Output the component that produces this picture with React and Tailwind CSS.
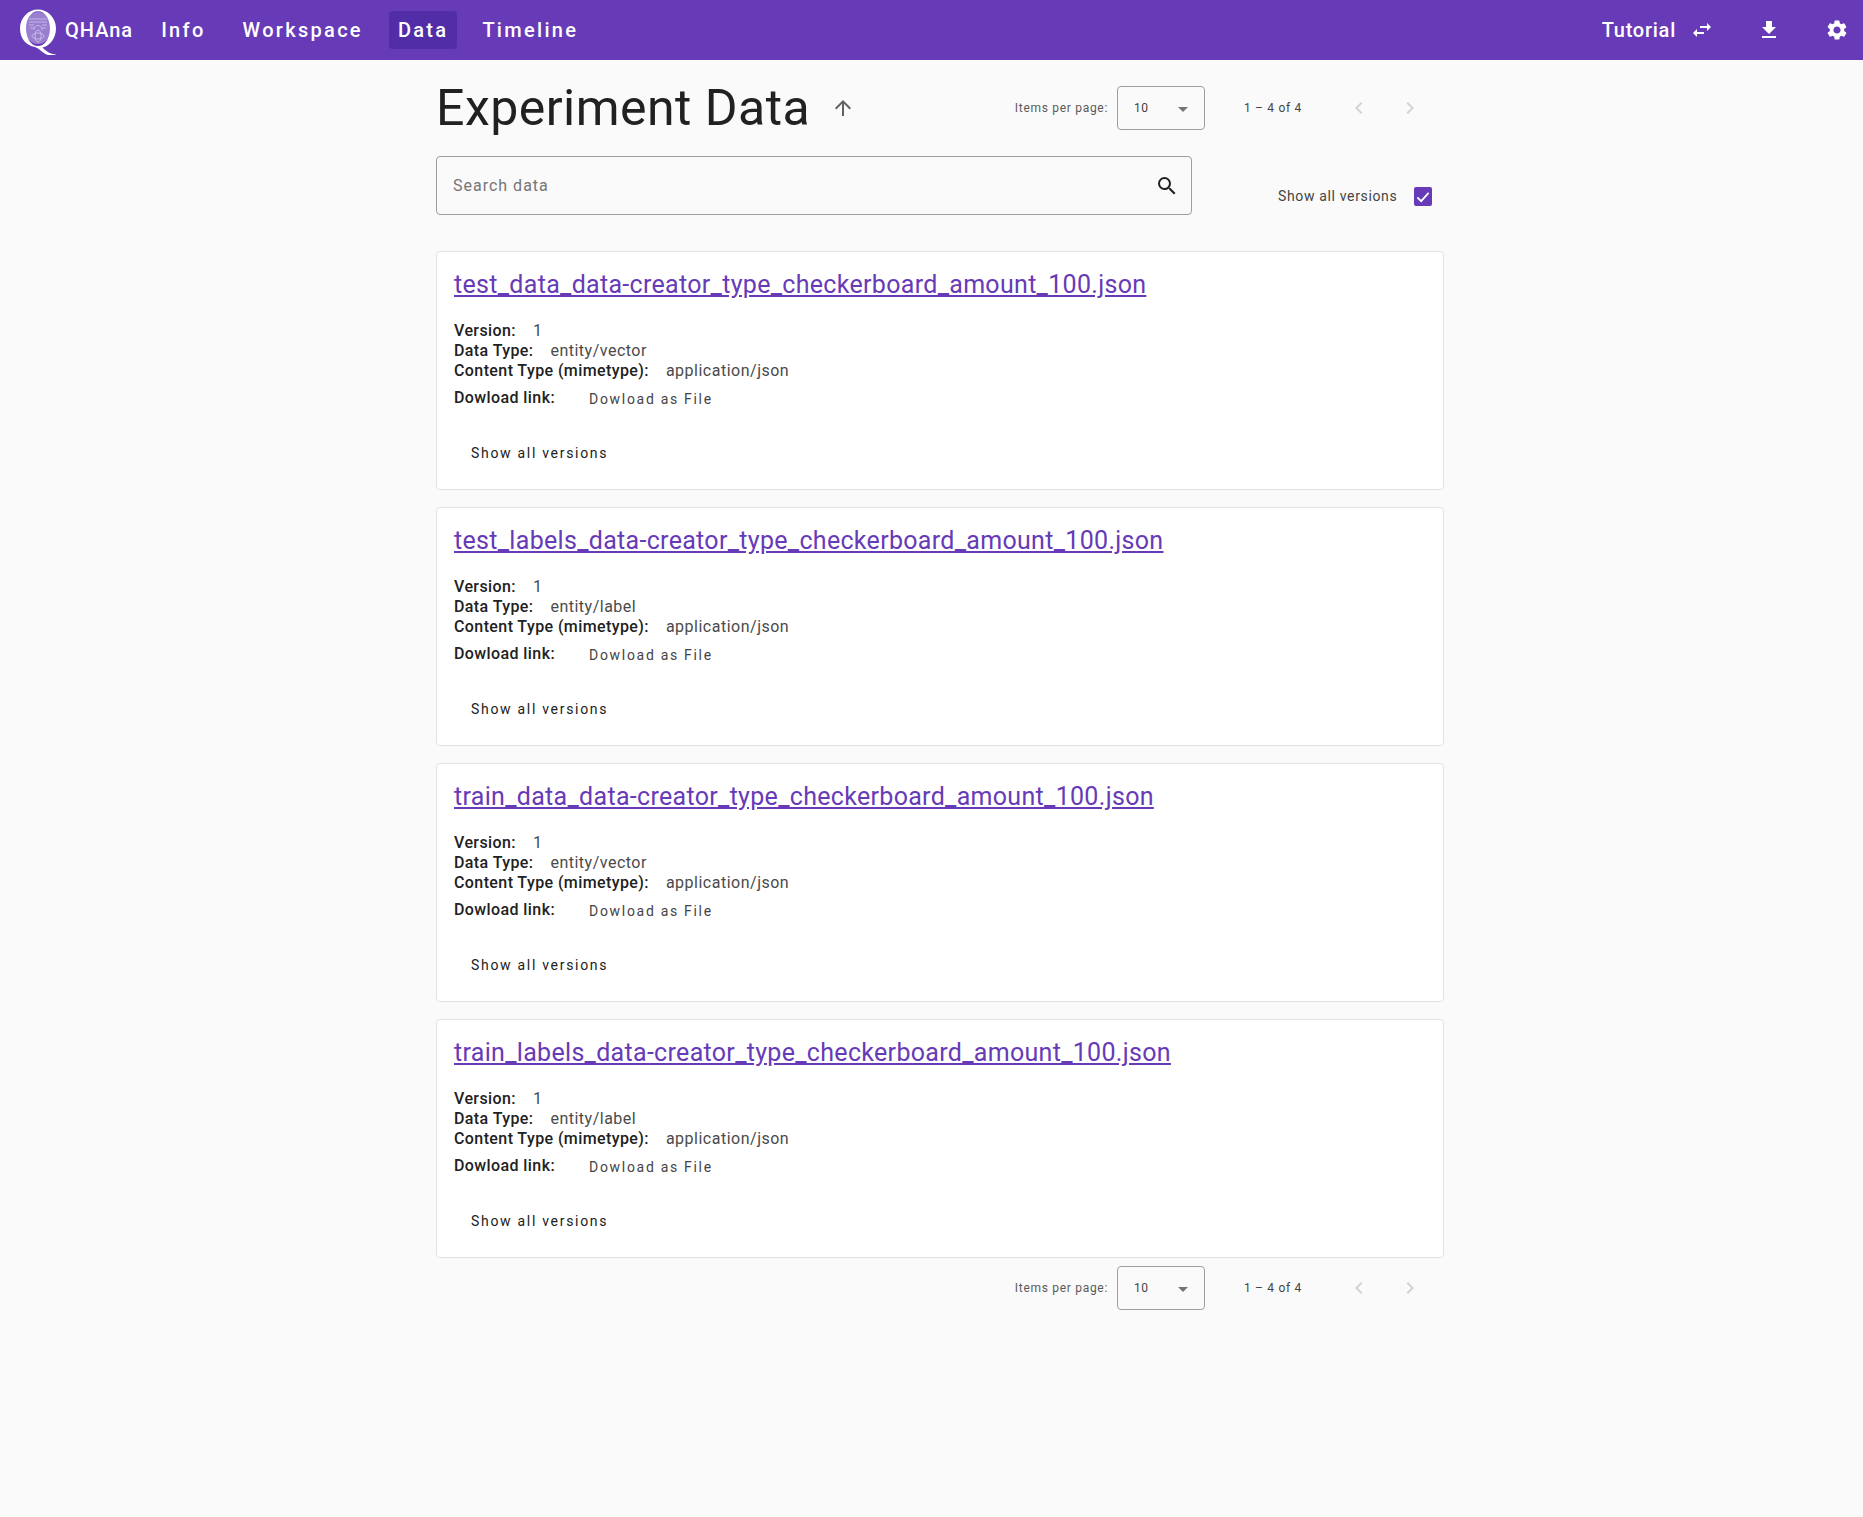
import React from 'react';

const ICONS = {
  swap: 'M6.99 11L3 15l3.99 4v-3H14v-2H6.99v-3zM21 9l-3.99-4v3H10v2h7.01v3L21 9z',
  download: 'M19 9h-4V3H9v6H5l7 7 7-7zM5 18v2h14v-2H5z',
  settings:
    'M19.14 12.94c.04-.3.06-.61.06-.94 0-.32-.02-.64-.07-.94l2.03-1.58a.49.49 0 0 0 .12-.61l-1.92-3.32a.488.488 0 0 0-.59-.22l-2.39.96c-.5-.38-1.03-.7-1.62-.94l-.36-2.54a.484.484 0 0 0-.48-.41h-3.84c-.24 0-.43.17-.47.41l-.36 2.54c-.59.24-1.13.57-1.62.94l-2.39-.96c-.22-.08-.47 0-.59.22L2.74 8.87c-.12.21-.08.47.12.61l2.03 1.58c-.05.3-.09.63-.09.94s.02.64.07.94l-2.03 1.58a.49.49 0 0 0-.12.61l1.92 3.32c.12.22.37.29.59.22l2.39-.96c.5.38 1.03.7 1.62.94l.36 2.54c.05.24.24.41.48.41h3.84c.24 0 .44-.17.47-.41l.36-2.54c.59-.24 1.13-.56 1.62-.94l2.39.96c.22.08.47 0 .59-.22l1.92-3.32c.12-.22.07-.47-.12-.61l-2.01-1.58zM12 15.6c-1.98 0-3.6-1.62-3.6-3.6s1.62-3.6 3.6-3.6 3.6 1.62 3.6 3.6-1.62 3.6-3.6 3.6z',
  arrowUp: 'M4 12l1.41 1.41L11 7.83V20h2V7.83l5.58 5.59L20 12l-8-8-8 8z',
  search:
    'M15.5 14h-.79l-.28-.27A6.471 6.471 0 0 0 16 9.5 6.5 6.5 0 1 0 9.5 16c1.61 0 3.09-.59 4.23-1.57l.27.28v.79l5 4.99L20.49 19l-4.99-5zm-6 0C7.01 14 5 11.99 5 9.5S7.01 5 9.5 5 14 7.01 14 9.5 11.99 14 9.5 14z',
  prev: 'M15.41 7.41L14 6l-6 6 6 6 1.41-1.41L10.83 12z',
  next: 'M10 6L8.59 7.41 13.17 12l-4.58 4.59L10 18l6-6z',
};

const FILES = [
  { name: 'test_data_data-creator_type_checkerboard_amount_100.json', type: 'entity/vector' },
  { name: 'test_labels_data-creator_type_checkerboard_amount_100.json', type: 'entity/label' },
  { name: 'train_data_data-creator_type_checkerboard_amount_100.json', type: 'entity/vector' },
  { name: 'train_labels_data-creator_type_checkerboard_amount_100.json', type: 'entity/label' },
];

function Icon({ name, className }) {
  return (
    <svg viewBox="0 0 24 24" fill="currentColor" className={className}>
      <path d={ICONS[name]} />
    </svg>
  );
}

function Logo() {
  return (
    <svg viewBox="0 0 38 50" className="h-[50px] w-[38px]">
      <ellipse cx="19" cy="23" rx="14" ry="16" fill="#9a7fd0" />
      <g stroke="#d9cdf0" strokeWidth="0.7" fill="none">
        <path d="M10 14h18M10 17h18M10 20h5M23 20h5M11 23h4M23 23h4" />
        <ellipse cx="19" cy="31" rx="6" ry="3" />
        <ellipse cx="19" cy="31" rx="3" ry="6" />
        <path d="M15 25c0-6 8-6 8 0" />
      </g>
      <path
        fill="#fff"
        fillRule="evenodd"
        d="M19 4.500C9.500 4.500 1 12.500 1 23.500c0 10 6.500 17.500 15 18.500 4 1.500 8 6 11.500 7.500 2.500 1 5.500 1.200 9 .8v-1c-4 .2-9-2.500-13-6.800C31 41 37 33 37 23.500 37 12.500 28.500 4.500 19 4.500zm0 1.800c7 0 12 7.500 12 17.200s-5 17.500-12 17.500-12-7.800-12-17.500S12 6.300 19 6.300z"
      />
    </svg>
  );
}

function NavItem({ children, active, className = '' }) {
  return (
    <a
      className={`flex h-[38px] items-center rounded px-2 text-[20px] font-medium tracking-[2.3px] text-white ${
        active ? 'bg-[#512da8] px-[9px]' : ''
      } ${className}`}
    >
      {children}
    </a>
  );
}

function Paginator() {
  return (
    <div className="flex items-center text-[12px] tracking-[0.4px] text-[#444]">
      <span className="mr-[9px] tracking-[0.7px] text-[#5a5a5a]">Items per page:</span>
      <div className="flex h-[44px] w-[88px] items-center justify-between rounded border border-[#9e9e9e] pl-4 pr-[16px]">
        <span>10</span>
        <span className="mt-[3px] h-0 w-0 border-x-[5px] border-t-[5px] border-x-transparent border-t-[#757575]" />
      </div>
      <span className="ml-[39px] w-[58px] whitespace-nowrap tracking-[0.7px]">1 – 4 of 4</span>
      <Icon name="prev" className="ml-[45px] h-6 w-6 text-[#d3d3d3]" />
      <Icon name="next" className="ml-[27px] h-6 w-6 text-[#d3d3d3]" />
    </div>
  );
}

function FileCard({ file }) {
  return (
    <div className="mb-[17px] h-[239px] rounded border border-[#e3e3e3] bg-white px-[17px] pt-[17px]">
      <a className="block text-[25px] leading-[32px] tracking-[0.31px] text-[#673ab7] underline">{file.name}</a>
      <div className="mt-[20px] text-[16px] leading-[20px] tracking-[0.5px] text-[#4a4a4a]">
        <div>
          <b className="mr-[17px] font-medium tracking-[0.4px] text-[#212121]">Version:</b>1
        </div>
        <div>
          <b className="mr-[17px] font-medium tracking-[0.4px] text-[#212121]">Data Type:</b>
          {file.type}
        </div>
        <div>
          <b className="mr-[17px] font-medium tracking-[0.4px] text-[#212121]">Content Type (mimetype):</b>
          application/json
        </div>
      </div>
      <div className="mt-[5px] flex items-center text-[16px] leading-[20px] tracking-[0.4px]">
        <b className="font-medium text-[#212121]">Dowload link:</b>
        <a className="ml-[34px] mt-[3px] text-[14px] font-[450] tracking-[1.7px] text-[#444]">Dowload as File</a>
      </div>
      <a className="ml-[17px] mt-[34px] block text-[14px] font-[450] leading-[20px] tracking-[1.7px] text-[#212121]">
        Show all versions
      </a>
    </div>
  );
}

export default function App() {
  return (
    <div className="min-h-screen bg-[#fafafa] font-['Roboto',sans-serif]">
      <header className="flex h-[60px] items-center bg-[#673ab7] pl-[19px] pr-[14px]">
        <Logo />
        <span className="ml-[8px] mr-[20px] text-[20px] font-medium tracking-[1px] text-white">QHAna</span>
        <NavItem className="mr-[21px]">Info</NavItem>
        <NavItem className="mr-[18px]">Workspace</NavItem>
        <NavItem className="mr-[17px]" active>
          Data
        </NavItem>
        <NavItem>Timeline</NavItem>
        <div className="ml-auto flex items-center text-white">
          <span className="text-[20px] font-medium tracking-[0.75px]">Tutorial</span>
          <Icon name="swap" className="ml-[14px] h-6 w-6" />
          <Icon name="download" className="ml-[43px] h-6 w-6" />
          <Icon name="settings" className="ml-[44px] h-6 w-6" />
        </div>
      </header>

      <main className="mx-auto w-[1025px] pl-[17px]">
        <div className="flex h-[96px] w-[1008px] items-center justify-between">
          <div className="flex items-center">
            <h1 className="text-[50px] font-normal leading-[56px] tracking-[0.47px] text-[#212121]">Experiment Data</h1>
            <Icon name="arrowUp" className="ml-[21px] -mt-[1px] h-6 w-6 text-[#616161]" />
          </div>
          <div className="pr-[22px]">
            <Paginator />
          </div>
        </div>

        <div className="flex w-[1008px] items-start">
          <div className="flex h-[59px] w-[756px] items-center justify-between rounded border border-[#9e9e9e] pl-4 pr-[12px]">
            <span className="mt-[1px] text-[16px] tracking-[1px] text-[#757575]">Search data</span>
            <Icon name="search" className="h-6 w-6 text-[#212121]" />
          </div>
          <label className="ml-[86px] mt-[30px] flex items-center text-[14px] tracking-[0.65px] text-[#444]">
            Show all versions
            <span className="ml-[17px] flex h-[19px] w-[18px] items-center justify-center rounded-[2px] bg-[#673ab7]">
              <svg viewBox="0 0 24 24" className="h-[18px] w-[18px]" fill="none" stroke="#fff" strokeWidth="2.4">
                <path d="M4.500 12.500l5 5 10-11" />
              </svg>
            </span>
          </label>
        </div>

        <div className="mt-[36px] w-[1008px]">
          {FILES.map((file) => (
            <FileCard key={file.name} file={file} />
          ))}
        </div>

        <div className="-mt-[9px] flex w-[1008px] justify-end pr-[22px]">
          <Paginator />
        </div>
      </main>
    </div>
  );
}
